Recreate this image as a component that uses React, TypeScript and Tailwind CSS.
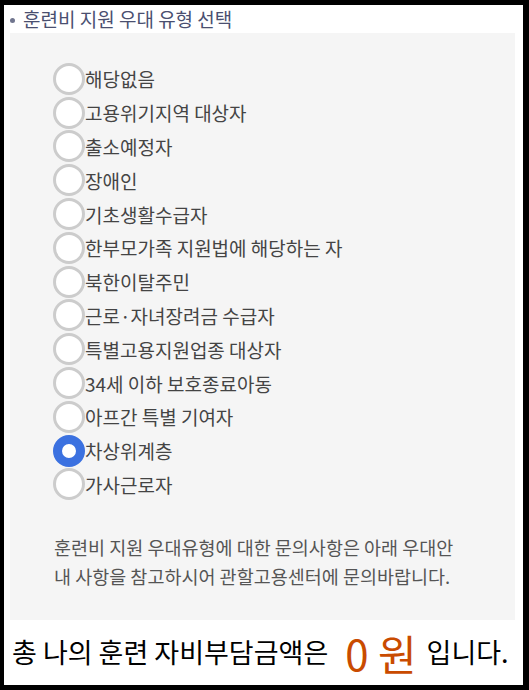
import React from 'react';

const OPTIONS = [
  '해당없음',
  '고용위기지역 대상자',
  '출소예정자',
  '장애인',
  '기초생활수급자',
  '한부모가족 지원법에 해당하는 자',
  '북한이탈주민',
  '근로·자녀장려금 수급자',
  '특별고용지원업종 대상자',
  '34세 이하 보호종료아동',
  '아프간 특별 기여자',
  '차상위계층',
  '가사근로자',
];

const SELECTED = '차상위계층';

const font = { fontFamily: '"Noto Sans CJK KR", "Noto Sans", sans-serif' };

export default function App() {
  return (
    <div
      className="w-[529px] h-[690px] bg-white border-black border-t-[5px] border-l-4 border-r-[6px] border-b-[5px] flex flex-col"
      style={font}
    >
      {/* Section title */}
      <div className="h-[28px] flex items-center pl-[6px] text-[19px] text-[#4a4f70]">
        <span className="w-[5px] h-[5px] rounded-full bg-[#70758e] mr-[8px] mt-[2px]" />
        <span>훈련비 지원 우대 유형 선택</span>
      </div>

      {/* Options panel */}
      <div className="ml-[6px] mr-[8px] h-[587px] bg-[#f5f5f5] pt-[29px] pl-[43px] flex flex-col">
        {OPTIONS.map((label) => {
          const on = label === SELECTED;
          return (
            <label key={label} className="h-[33.8px] flex items-center">
              <span
                className={
                  on
                    ? 'w-8 h-8 rounded-full bg-white border-[9px] border-[#3b71e0] shrink-0'
                    : 'w-8 h-8 rounded-full bg-white border-[3px] border-[#cccccc] shrink-0'
                }
              />
              <span className="text-[19px] text-[#444] leading-none">{label}</span>
            </label>
          );
        })}

        <p className="mt-[32px] pl-[1px] text-[18.5px] leading-[29px] text-[#555] whitespace-nowrap">
          훈련비 지원 우대유형에 대한 문의사항은 아래 우대안
          <br />
          내 사항을 참고하시어 관할고용센터에 문의바랍니다.
        </p>
      </div>

      {/* Total */}
      <div className="flex-1 flex items-center pl-[8px] text-black whitespace-nowrap">
        <span className="text-[27px]">총 나의 훈련 자비부담금액은</span>
        <span className="text-[42px] text-[#c94b00] ml-[17px] leading-none">0 원</span>
        <span className="text-[27px] ml-[10px]">입니다.</span>
      </div>
    </div>
  );
}
